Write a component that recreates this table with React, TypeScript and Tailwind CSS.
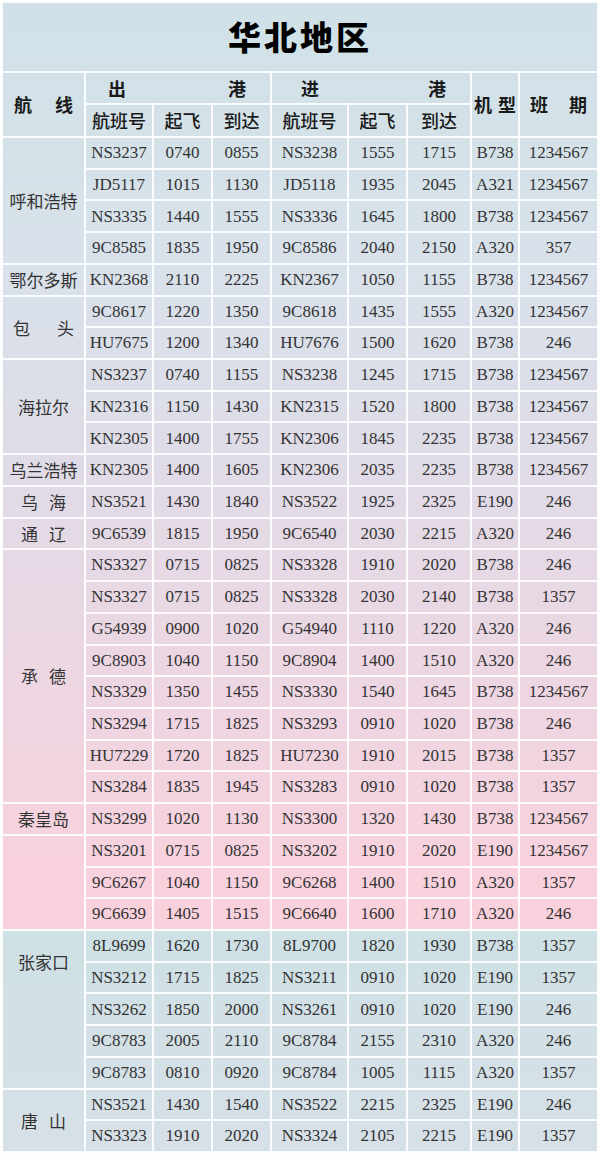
import React from 'react';

type Group = {
  label: string;
  mode: 'plain' | 'gap' | 'spread' | 'top';
  rows: string[][];
};

const groups: Group[] = [
  {
    label: '呼和浩特',
    mode: 'plain',
    rows: [
      ['NS3237', '0740', '0855', 'NS3238', '1555', '1715', 'B738', '1234567'],
      ['JD5117', '1015', '1130', 'JD5118', '1935', '2045', 'A321', '1234567'],
      ['NS3335', '1440', '1555', 'NS3336', '1645', '1800', 'B738', '1234567'],
      ['9C8585', '1835', '1950', '9C8586', '2040', '2150', 'A320', '357'],
    ],
  },
  {
    label: '鄂尔多斯',
    mode: 'plain',
    rows: [['KN2368', '2110', '2225', 'KN2367', '1050', '1155', 'B738', '1234567']],
  },
  {
    label: '包头',
    mode: 'spread',
    rows: [
      ['9C8617', '1220', '1350', '9C8618', '1435', '1555', 'A320', '1234567'],
      ['HU7675', '1200', '1340', 'HU7676', '1500', '1620', 'B738', '246'],
    ],
  },
  {
    label: '海拉尔',
    mode: 'plain',
    rows: [
      ['NS3237', '0740', '1155', 'NS3238', '1245', '1715', 'B738', '1234567'],
      ['KN2316', '1150', '1430', 'KN2315', '1520', '1800', 'B738', '1234567'],
      ['KN2305', '1400', '1755', 'KN2306', '1845', '2235', 'B738', '1234567'],
    ],
  },
  {
    label: '乌兰浩特',
    mode: 'plain',
    rows: [['KN2305', '1400', '1605', 'KN2306', '2035', '2235', 'B738', '1234567']],
  },
  {
    label: '乌海',
    mode: 'gap',
    rows: [['NS3521', '1430', '1840', 'NS3522', '1925', '2325', 'E190', '246']],
  },
  {
    label: '通辽',
    mode: 'gap',
    rows: [['9C6539', '1815', '1950', '9C6540', '2030', '2215', 'A320', '246']],
  },
  {
    label: '承德',
    mode: 'gap',
    rows: [
      ['NS3327', '0715', '0825', 'NS3328', '1910', '2020', 'B738', '246'],
      ['NS3327', '0715', '0825', 'NS3328', '2030', '2140', 'B738', '1357'],
      ['G54939', '0900', '1020', 'G54940', '1110', '1220', 'A320', '246'],
      ['9C8903', '1040', '1150', '9C8904', '1400', '1510', 'A320', '246'],
      ['NS3329', '1350', '1455', 'NS3330', '1540', '1645', 'B738', '1234567'],
      ['NS3294', '1715', '1825', 'NS3293', '0910', '1020', 'B738', '246'],
      ['HU7229', '1720', '1825', 'HU7230', '1910', '2015', 'B738', '1357'],
      ['NS3284', '1835', '1945', 'NS3283', '0910', '1020', 'B738', '1357'],
    ],
  },
  {
    label: '秦皇岛',
    mode: 'plain',
    rows: [['NS3299', '1020', '1130', 'NS3300', '1320', '1430', 'B738', '1234567']],
  },
  {
    label: '',
    mode: 'plain',
    rows: [
      ['NS3201', '0715', '0825', 'NS3202', '1910', '2020', 'E190', '1234567'],
      ['9C6267', '1040', '1150', '9C6268', '1400', '1510', 'A320', '1357'],
      ['9C6639', '1405', '1515', '9C6640', '1600', '1710', 'A320', '246'],
    ],
  },
  {
    label: '张家口',
    mode: 'top',
    rows: [
      ['8L9699', '1620', '1730', '8L9700', '1820', '1930', 'B738', '1357'],
      ['NS3212', '1715', '1825', 'NS3211', '0910', '1020', 'E190', '1357'],
      ['NS3262', '1850', '2000', 'NS3261', '0910', '1020', 'E190', '246'],
      ['9C8783', '2005', '2110', '9C8784', '2155', '2310', 'A320', '246'],
      ['9C8783', '0810', '0920', '9C8784', '1005', '1115', 'A320', '1357'],
    ],
  },
  {
    label: '唐山',
    mode: 'gap',
    rows: [
      ['NS3521', '1430', '1540', 'NS3522', '2215', '2325', 'E190', '246'],
      ['NS3323', '1910', '2020', 'NS3324', '2105', '2215', 'E190', '1357'],
    ],
  },
];

function RouteLabel({ g }: { g: Group }) {
  const chars = g.label.split('');
  if (g.mode === 'spread') {
    return (
      <div className="flex justify-between px-[10px]">
        {chars.map((c, i) => (
          <span key={i}>{c}</span>
        ))}
      </div>
    );
  }
  if (g.mode === 'gap') {
    return (
      <div className="flex justify-center gap-[11px]">
        {chars.map((c, i) => (
          <span key={i}>{c}</span>
        ))}
      </div>
    );
  }
  if (g.mode === 'top') {
    return <div className="pt-[19px] leading-[24px]">{g.label}</div>;
  }
  return <div>{g.label}</div>;
}

export default function App() {
  const cell = 'border-2 border-white/90 p-0 text-center align-middle';

  return (
    <div className="w-[600px] h-[1155px] bg-white pl-[1px] pt-[1px] font-['Liberation_Serif','Noto_Sans_CJK_SC',serif] text-[17px] text-[#333]">
      <table className="w-[596px] table-fixed border-collapse bg-[linear-gradient(180deg,#cfe1e7_0px,#d4e2e8_130px,#d9e1ea_270px,#dcdee8_400px,#e3dae6_520px,#ebd7e3_650px,#f2d4e0_780px,#f8d1dd_880px,#f9d1dc_928px,#cee1e5_928px,#d3e0e6_1040px,#d7e0e7_1152px)]">
        <colgroup>
          <col className="w-[83px]" />
          <col className="w-[68px]" />
          <col className="w-[59px]" />
          <col className="w-[59px]" />
          <col className="w-[77px]" />
          <col className="w-[59px]" />
          <col className="w-[64px]" />
          <col className="w-[48px]" />
          <col className="w-[79px]" />
        </colgroup>
        <tbody>
          <tr className="h-[70px]">
            <td colSpan={9} className={cell}>
              <span className="font-['Noto_Sans_CJK_SC',sans-serif] text-[33px] font-black tracking-[3px] text-black">
                华北地区
              </span>
            </td>
          </tr>
          <tr className="h-[32px] font-['Noto_Sans_CJK_SC',serif] text-[18px] font-bold text-[#1a1a1a]">
            <td rowSpan={2} className={cell}>
              <div className="flex justify-between px-[11px]">
                <span>航</span>
                <span>线</span>
              </div>
            </td>
            <td colSpan={3} className={cell}>
              <div className="flex justify-between pl-[22px] pr-[24px]">
                <span>出</span>
                <span>港</span>
              </div>
            </td>
            <td colSpan={3} className={cell}>
              <div className="flex justify-between pl-[29px] pr-[24px]">
                <span>进</span>
                <span>港</span>
              </div>
            </td>
            <td rowSpan={2} className={cell}>
              <div className="flex justify-center gap-[6px]">
                <span>机</span>
                <span>型</span>
              </div>
            </td>
            <td rowSpan={2} className={cell}>
              <div className="flex justify-between px-[10px]">
                <span>班</span>
                <span>期</span>
              </div>
            </td>
          </tr>
          <tr className="h-[33px] font-['Noto_Sans_CJK_SC',serif] text-[18px] font-medium text-[#1a1a1a]">
            <td className={cell}>航班号</td>
            <td className={cell}>起飞</td>
            <td className={cell}>到达</td>
            <td className={cell}>航班号</td>
            <td className={cell}>起飞</td>
            <td className={cell}>到达</td>
          </tr>
          {groups.flatMap((g, gi) =>
            g.rows.map((r, ri) => (
              <tr key={`${gi}-${ri}`} className="h-[31.72px]">
                {ri === 0 && (
                  <td
                    rowSpan={g.rows.length}
                    className={`${cell} font-['Noto_Sans_CJK_SC',serif] text-[17px] ${
                      g.mode === 'top' ? 'align-top' : ''
                    }`}
                  >
                    <RouteLabel g={g} />
                  </td>
                )}
                {r.map((c, ci) => (
                  <td key={ci} className={cell}>
                    {c}
                  </td>
                ))}
              </tr>
            ))
          )}
        </tbody>
      </table>
    </div>
  );
}
